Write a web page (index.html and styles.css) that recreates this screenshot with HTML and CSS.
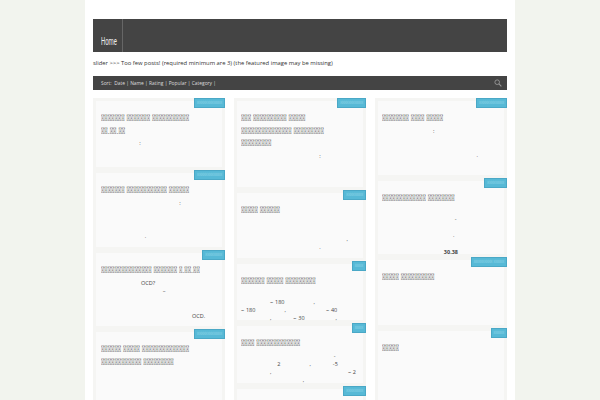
FILE: index.html
```html
<!DOCTYPE html>
<html lang="si">
<head>
<meta charset="utf-8">
<title>Home</title>
<link rel="stylesheet" href="styles.css">
</head>
<body>
<div class="page">
  <nav class="nav"><a class="nav-item"><span class="nav-label">Home</span></a></nav>
  <p class="notice">slider &gt;&gt;&gt; Too few posts! (required minimum are 3) (the featured image may be missing)</p>
  <div class="sortbar">
    <span>Sort: &nbsp;Date | Name | Rating | Popular | Category |</span>
    <svg class="search" viewBox="0 0 10 10" width="8" height="8"><circle cx="4" cy="4" r="2.9" fill="none" stroke="#999" stroke-width="1.1"/><path d="M6.2 6.2 9.2 9.2" stroke="#999" stroke-width="1.3"/></svg>
  </div>
  <div class="grid">
    <div class="col">
      <article class="card h72">
        <span class="badge">&#xE000;&#xE000;&#xE000;&#xE000;&#xE000;&#xE000;&#xE000;&#xE000;&#xE000;&#xE000;&#xE000;&#xE000;</span>
        <h2>&#xE000;&#xE000;&#xE000;&#xE000;&#xE000;&#xE000;&#xE000; &#xE000;&#xE000;&#xE000;&#xE000;&#xE000;&#xE000;&#xE000; &#xE000;&#xE000;&#xE000;&#xE000;&#xE000;&#xE000;&#xE000;&#xE000;&#xE000;&#xE000;&#xE000;<br>&#xE000;&#xE000;.&#xE000;&#xE000;.&#xE000;&#xE000;</h2>
        <p class="body">                     :</p>
      </article>
      <article class="card h80">
        <span class="badge">&#xE000;&#xE000;&#xE000;&#xE000;&#xE000;&#xE000;&#xE000;&#xE000;&#xE000;&#xE000;&#xE000;&#xE000;</span>
        <h2>&#xE000;&#xE000;&#xE000;&#xE000;&#xE000;&#xE000;&#xE000; &#xE000;&#xE000;&#xE000;&#xE000;&#xE000;&#xE000;&#xE000;&#xE000;&#xE000;&#xE000;&#xE000;&#xE000; &#xE000;&#xE000;&#xE000;&#xE000;&#xE000;&#xE000;</h2>
        <p class="body">                                           :



                        .</p>
      </article>
      <article class="card h79">
        <span class="badge">&#xE000;&#xE000;&#xE000;&#xE000;&#xE000;&#xE000;&#xE000;&#xE000;</span>
        <h2>&#xE000;&#xE000;&#xE000;&#xE000;&#xE000;&#xE000;&#xE000;&#xE000;&#xE000;&#xE000;&#xE000;&#xE000;&#xE000;&#xE000;&#xE000; &#xE000;&#xE000;&#xE000;&#xE000;&#xE000;&#xE000;&#xE000; &#xE000;.&#xE000;&#xE000;.&#xE000;&#xE000;</h2>
        <p class="body">                      OCD?
                                  –


                                                  OCD.</p>
      </article>
      <article class="card h100">
        <span class="badge">&#xE000;&#xE000;&#xE000;&#xE000;&#xE000;&#xE000;&#xE000;&#xE000;&#xE000;&#xE000;&#xE000;&#xE000;</span>
        <h2>&#xE000;&#xE000;&#xE000;&#xE000;&#xE000;&#xE000; &#xE000;&#xE000;&#xE000;&#xE000;&#xE000; &#xE000;&#xE000;&#xE000;&#xE000;&#xE000;&#xE000;&#xE000;&#xE000;&#xE000;&#xE000;&#xE000;&#xE000;&#xE000;&#xE000;<br>&#xE000;&#xE000;&#xE000;&#xE000;&#xE000;&#xE000;&#xE000;&#xE000;&#xE000;&#xE000;&#xE000;&#xE000; &#xE000;&#xE000;&#xE000;&#xE000;&#xE000;&#xE000;&#xE000;&#xE000;&#xE000;</h2>
      </article>
    </div>
    <div class="col">
      <article class="card h92">
        <span class="badge">&#xE000;&#xE000;&#xE000;&#xE000;&#xE000;&#xE000;&#xE000;&#xE000;&#xE000;&#xE000;&#xE000;</span>
        <h2>&#xE000;&#xE000;&#xE000; &#xE000;&#xE000;&#xE000;&#xE000;&#xE000;&#xE000;&#xE000;&#xE000;&#xE000;&#xE000; &#xE000;&#xE000;&#xE000;&#xE000;&#xE000;<br>&#xE000;&#xE000;&#xE000;&#xE000;&#xE000;&#xE000;&#xE000;&#xE000;&#xE000;&#xE000;&#xE000;&#xE000;&#xE000;&#xE000;&#xE000; &#xE000;&#xE000;&#xE000;&#xE000;&#xE000;&#xE000;&#xE000;&#xE000;&#xE000;<br>&#xE000;&#xE000;&#xE000;&#xE000;&#xE000;&#xE000;&#xE000;&#xE000;&#xE000;</h2>
        <p class="body">                                           :</p>
      </article>
      <article class="card h71">
        <span class="badge">&#xE000;&#xE000;&#xE000;&#xE000;&#xE000;&#xE000;&#xE000;&#xE000;</span>
        <h2>&#xE000;&#xE000;&#xE000;&#xE000;&#xE000; &#xE000;&#xE000;&#xE000;&#xE000;&#xE000;&#xE000;</h2>
        <p class="body">

                                                          ,
                                           .</p>
      </article>
      <article class="card h62">
        <span class="badge">&#xE000;&#xE000;&#xE000;&#xE000;</span>
        <h2>&#xE000;&#xE000;&#xE000;&#xE000;&#xE000;&#xE000;&#xE000; &#xE000;&#xE000;&#xE000;&#xE000;&#xE000; &#xE000;&#xE000;&#xE000;&#xE000;&#xE000;&#xE000;&#xE000;&#xE000;&#xE000;</h2>
        <p class="body">
                ~ 180                ,
~ 180                ,                      ~ 40
                ,            ~ 30                 ,</p>
      </article>
      <article class="card h63">
        <span class="badge">&#xE000;&#xE000;&#xE000;&#xE000;</span>
        <h2>&#xE000;&#xE000;&#xE000;&#xE000; &#xE000;&#xE000;&#xE000;&#xE000;&#xE000;&#xE000;&#xE000;&#xE000;&#xE000;&#xE000;&#xE000;&#xE000;&#xE000;</h2>
        <p class="body">                                                   -
                    2                ,            -5
                ,                                          ~ 2
                                  ,</p>
      </article>
      <article class="card h100">
        <span class="badge">&#xE000;&#xE000;&#xE000;&#xE000;&#xE000;&#xE000;&#xE000;&#xE000;</span>
        <h2>&#xE000;&#xE000;&#xE000;&#xE000;</h2>
      </article>
    </div>
    <div class="col">
      <article class="card h80">
        <span class="badge">&#xE000;&#xE000;&#xE000;&#xE000;&#xE000;&#xE000;&#xE000;&#xE000;&#xE000;&#xE000;&#xE000;&#xE000;</span>
        <h2>&#xE000;&#xE000;&#xE000;&#xE000;&#xE000;&#xE000;&#xE000;&#xE000; &#xE000;&#xE000;&#xE000;&#xE000; &#xE000;&#xE000;&#xE000;&#xE000;&#xE000;</h2>
        <p class="body">                            :


                                                    .</p>
      </article>
      <article class="card h79">
        <span class="badge">&#xE000;&#xE000;&#xE000;&#xE000;&#xE000;&#xE000;&#xE000;&#xE000;</span>
        <h2>&#xE000;&#xE000;&#xE000;&#xE000;&#xE000;&#xE000;&#xE000;&#xE000;&#xE000;&#xE000;&#xE000;&#xE000;&#xE000; &#xE000;&#xE000;&#xE000;&#xE000;&#xE000;&#xE000;&#xE000;&#xE000;</h2>
        <p class="body">
                                        -

                                       .

                                  <b>30.38</b></p>
      </article>
      <article class="card h71">
        <span class="badge">&#xE000;&#xE000;&#xE000;&#xE000;&#xE000;&#xE000;&#xE000;&#xE000;&#xE000; &#xE000;&#xE000;&#xE000;&#xE000;&#xE000;</span>
        <h2>&#xE000;&#xE000;&#xE000;&#xE000;&#xE000; &#xE000;&#xE000;&#xE000;&#xE000;&#xE000;&#xE000;&#xE000;&#xE000;&#xE000;&#xE000;</h2>
      </article>
      <article class="card h100">
        <span class="badge">&#xE000;&#xE000;&#xE000;&#xE000;&#xE000;</span>
        <h2>&#xE000;&#xE000;&#xE000;&#xE000;&#xE000;</h2>
      </article>
    </div>
  </div>
</div>
</body>
</html>
```
FILE: styles.css
```css
html, body {
  margin: 0;
  height: 100%;
  overflow: hidden;
  background: #f2f4ee;
}
body {
  font-family: "Open Sans", sans-serif;
  color: #444;
}
.page {
  width: 414px;
  min-height: 100%;
  margin: 0 auto;
  padding: 19px 8px 0;
  background: #fff;
}
.nav {
  display: flex;
  height: 33px;
  background: #444;
}
.nav-item {
  display: flex;
  align-items: flex-end;
  box-sizing: border-box;
  width: 30px;
  padding: 0 0 3px 8px;
  border-right: 1px solid #666;
  overflow: hidden;
}
.nav-label {
  display: inline-block;
  transform: scaleX(0.56);
  transform-origin: left;
  font: 10.5px/14px Roboto, sans-serif;
  color: #eee;
}
.notice {
  box-sizing: border-box;
  height: 24px;
  margin: 0;
  padding-top: 7px;
  font-size: 5.85px;
  line-height: 9px;
  color: #333;
}
.sortbar {
  display: flex;
  align-items: center;
  justify-content: space-between;
  height: 14px;
  padding: 0 5px 0 8px;
  background: #444;
  font-size: 4.9px;
  color: #ddd;
}
.grid {
  display: flex;
  gap: 9px;
  margin-top: 8px;
}
.col {
  display: flex;
  flex-direction: column;
  flex: 1 1 0;
}
.card {
  position: relative;
  box-sizing: border-box;
  padding: 0 4px;
  border: 3px solid #f5f5f3;
  background: #fafafa;
}
.col:first-child .card {
  padding: 0 5px;
}
.h62 { height: 62px; }
.h63 { height: 63px; }
.h71 { height: 71px; }
.h72 { height: 72px; }
.h79 { height: 79px; }
.h80 { height: 80px; }
.h92 { height: 92px; }
.h100 { height: 100px; }
.badge {
  position: absolute;
  top: -3px;
  right: -3px;
  box-sizing: border-box;
  height: 10px;
  padding: 0 2px;
  border: 1px solid #4aa8c6;
  background: #57b9d6;
  font: 4.7px/8px Roboto, sans-serif;
  color: #a9e0ee;
  white-space: nowrap;
}
.card h2 {
  width: 118%;
  margin: 11px 0 0;
  font: 400 9px/12.5px Roboto, sans-serif;
  color: #555;
  transform: scaleX(0.845);
  transform-origin: left;
}
.body {
  margin: 2px 0 0;
  font-size: 5.5px;
  word-spacing: 0.39px;
  line-height: 8.3px;
  white-space: pre;
  color: #444;
}
```
